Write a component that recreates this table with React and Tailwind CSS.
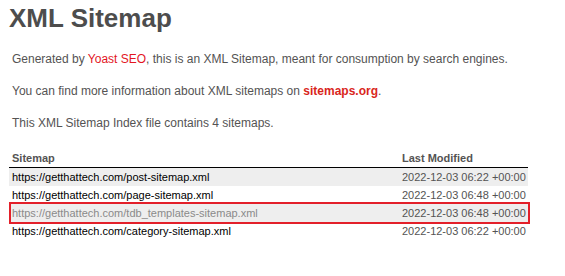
export default function App() {
  const rows = [
    ["https://getthattech.com/post-sitemap.xml", "2022-12-03 06:22 +00:00", false],
    ["https://getthattech.com/page-sitemap.xml", "2022-12-03 06:48 +00:00", false],
    ["https://getthattech.com/tdb_templates-sitemap.xml", "2022-12-03 06:48 +00:00", true],
    ["https://getthattech.com/category-sitemap.xml", "2022-12-03 06:22 +00:00", false],
  ];
  return (
    <div
      className="w-[565px] h-[276px] bg-white pl-[9px] text-[#545353] overflow-hidden"
      style={{ fontFamily: '"Liberation Sans", Arial, sans-serif' }}
    >
      <h1 className="pt-[3px] text-[26px] leading-[30px] font-bold text-[#4d4d4d]">XML Sitemap</h1>
      <div className="pl-[3px] pt-[17px] flex flex-col gap-[14px] text-[12px] leading-[18px]">
        <p>
          Generated by <span className="text-[#e3161f]">Yoast SEO</span>, this is an XML Sitemap, meant for consumption by search engines.
        </p>
        <p>
          You can find more information about XML sitemaps on{" "}
          <span className="text-[#d9261c] font-bold">sitemaps.org</span>.
        </p>
        <p>This XML Sitemap Index file contains 4 sitemaps.</p>
      </div>
      <div className="relative mt-[17px] w-[521px]">
        <table className="w-[519px] border-collapse text-[11px] leading-[18px]">
          <thead>
            <tr className="border-b border-black">
              <th className="text-left font-bold pl-[3px] h-[18px] p-0 text-[#545353]">Sitemap</th>
              <th className="text-left font-bold pl-[3px] h-[18px] p-0 w-[129px] text-[#545353]">Last Modified</th>
            </tr>
          </thead>
          <tbody>
            {rows.map(([url, date, dim], i) => (
              <tr key={i} className={i % 2 === 0 ? "bg-[#eeeeee]" : "bg-white"}>
                <td className={"pl-[3px] h-[18px] p-0 " + (dim ? "text-[#8a8a8a]" : "text-black")}>{url}</td>
                <td className="pl-[3px] h-[18px] p-0 text-[#545353]">{date}</td>
              </tr>
            ))}
          </tbody>
        </table>
        <div className="absolute left-0 top-[53px] w-[521px] h-[22px] border-2 border-[#e3202a]"></div>
      </div>
    </div>
  );
}
